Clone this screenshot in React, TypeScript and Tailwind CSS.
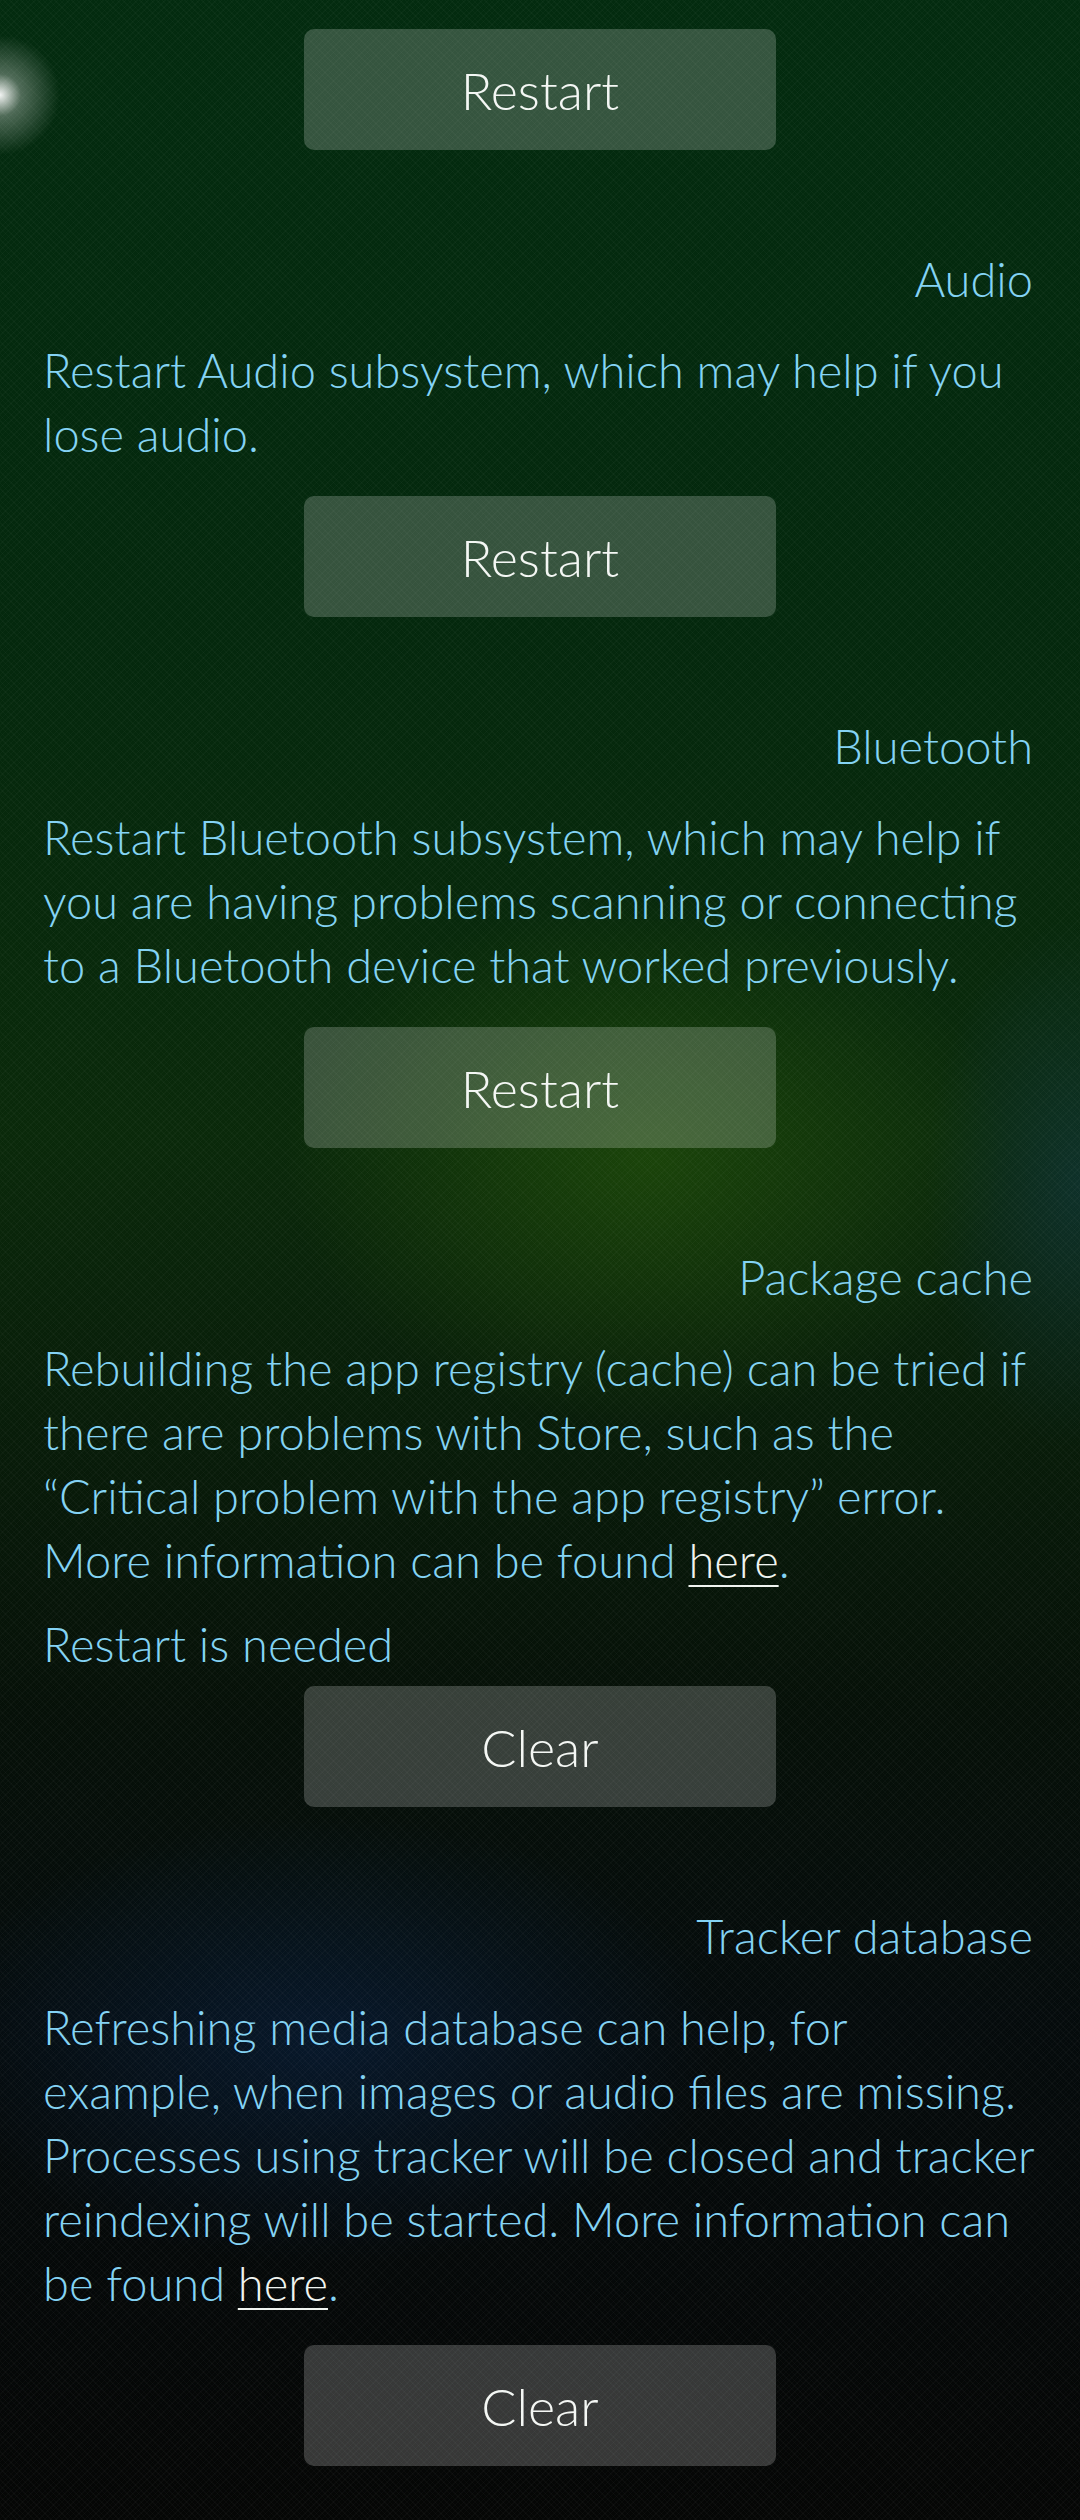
import type { ReactNode } from "react";

const font = { fontFamily: "Lato, 'Noto Sans', sans-serif" };

function ActionButton({ label }: { label: string }) {
    return (
        <div className="flex justify-center">
            <button className="flex h-[121px] w-[472px] items-center justify-center rounded-[10px] bg-white/20 text-[52px] font-light text-[#f4f7f4]">
                {label}
            </button>
        </div>
    );
}

function Here() {
    return (
        <span className="text-[#f0f4f0] underline decoration-2 underline-offset-[7px]">here</span>
    );
}

interface SectionProps {
    title: string;
    children: ReactNode;
    note?: string;
    action: string;
}

function Section({ title, children, note, action }: SectionProps) {
    return (
        <section className="mt-[97px]">
            <h2 className="pr-[4px] text-right text-[47px] font-light leading-[64px] text-[#84d3f4]">{title}</h2>
            <p className="mt-[27px] pb-[20px] text-[47px] font-light leading-[64px] text-[#84d3f4]">{children}</p>
            {note && <p className="text-[47px] font-light leading-[64px] text-[#84d3f4]">{note}</p>}
            <div className="mt-[10px]">
                <ActionButton label={action} />
            </div>
        </section>
    );
}

export default function App() {
    return (
        <div
            style={font}
            className="relative min-h-[2520px] w-[1080px] overflow-hidden bg-[linear-gradient(180deg,#032b0f_0%,#04280d_25%,#0a290a_45%,#061008_68%,#050b0c_80%,#050605_100%)]"
        >
            {/* wallpaper light */}
            <div className="pointer-events-none absolute inset-0 bg-[radial-gradient(ellipse_520px_380px_at_60%_46%,rgba(40,90,10,0.55),transparent_70%),radial-gradient(ellipse_220px_380px_at_100%_47%,rgba(20,60,80,0.45),transparent_70%),radial-gradient(ellipse_560px_320px_at_30%_81%,rgba(10,40,80,0.45),transparent_70%),radial-gradient(circle_60px_at_0px_95px,rgba(255,255,255,0.95),rgba(255,255,255,0.3)_35%,transparent_100%)]" />
            <div className="pointer-events-none absolute inset-0 bg-[repeating-linear-gradient(45deg,rgba(255,255,255,0.025)_0px,rgba(255,255,255,0.025)_1px,transparent_1px,transparent_4px),repeating-linear-gradient(-45deg,rgba(255,255,255,0.025)_0px,rgba(255,255,255,0.025)_1px,transparent_1px,transparent_4px)]" />

            <div className="relative px-[43px] pt-[29px] pb-[50px]">
                <ActionButton label="Restart" />

                <Section title="Audio" action="Restart">
                    Restart Audio subsystem, which may help if you
                    <br />
                    lose audio.
                </Section>

                <Section title="Bluetooth" action="Restart">
                    Restart Bluetooth subsystem, which may help if
                    <br />
                    you are having problems scanning or connecting
                    <br />
                    to a Bluetooth device that worked previously.
                </Section>

                <Section title="Package cache" note="Restart is needed" action="Clear">
                    Rebuilding the app registry (cache) can be tried if
                    <br />
                    there are problems with Store, such as the
                    <br />
                    “Critical problem with the app registry” error.
                    <br />
                    More information can be found <Here />.
                </Section>

                <Section title="Tracker database" action="Clear">
                    Refreshing media database can help, for
                    <br />
                    example, when images or audio files are missing.
                    <br />
                    Processes using tracker will be closed and tracker
                    <br />
                    reindexing will be started. More information can
                    <br />
                    be found <Here />.
                </Section>
            </div>
        </div>
    );
}
